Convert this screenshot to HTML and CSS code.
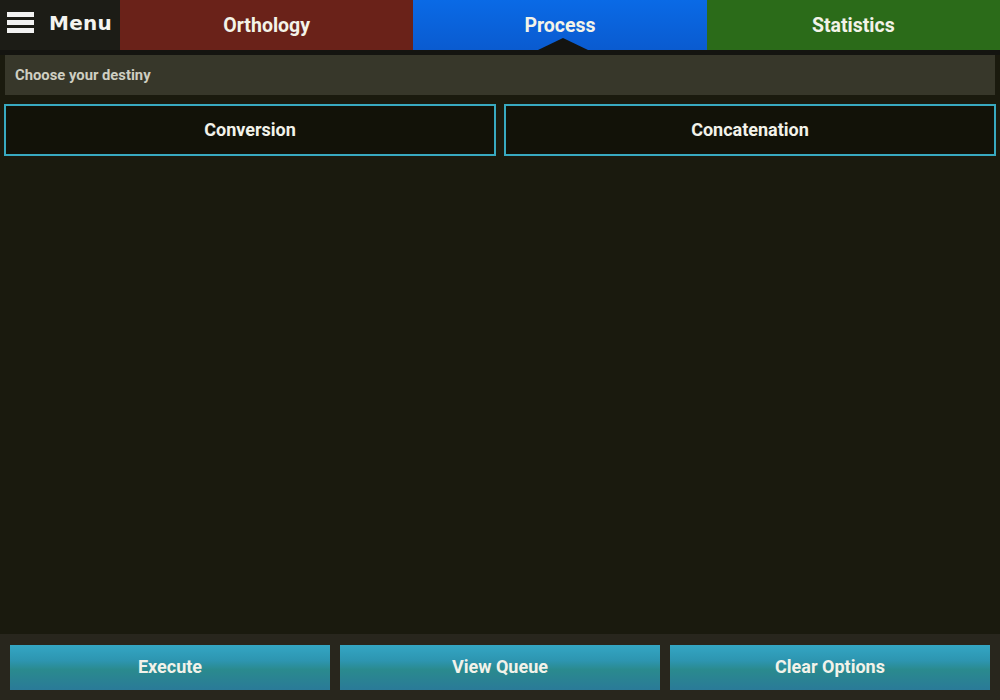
FILE: index.html
```html
<!DOCTYPE html>
<html>
<head>
<meta charset="utf-8">
<link rel="stylesheet" href="styles.css">
</head>
<body>
<div class="app">
  <header class="topbar">
    <div class="menu">
      <svg class="burger" width="28" height="22" viewBox="0 0 28 22"><rect x="0" y="0" width="27" height="5" fill="#f2f2f2"/><rect x="0" y="8" width="27" height="5" fill="#f2f2f2"/><rect x="0" y="16" width="27" height="5" fill="#f2f2f2"/></svg>
      <span class="menu-label">Menu</span>
    </div>
    <div class="tab tab-orth">Orthology</div>
    <div class="tab tab-proc active">Process</div>
    <div class="tab tab-stat">Statistics</div>
  </header>
  <div class="prompt"><span>Choose your destiny</span></div>
  <div class="choices">
    <button class="choice">Conversion</button>
    <button class="choice">Concatenation</button>
  </div>
  <main class="content"></main>
  <footer class="actions">
    <button class="action">Execute</button>
    <button class="action">View Queue</button>
    <button class="action">Clear Options</button>
  </footer>
</div>
</body>
</html>
```

FILE: styles.css
```css
html, body {
  margin: 0;
  padding: 0;
  width: 1000px;
  height: 700px;
  overflow: hidden;
  background: #1a1a0e;
  font-family: Roboto, "Liberation Sans", sans-serif;
}
.app {
  display: flex;
  flex-direction: column;
  height: 700px;
}
.topbar {
  display: flex;
  height: 50px;
  flex: none;
  border-bottom: 5px solid #141410;
}
.menu {
  width: 120px;
  flex: none;
  display: flex;
  align-items: center;
  padding-left: 7px;
  box-sizing: border-box;
  background: #1c1c16;
  padding-bottom: 4px;
}
.burger { display: block; }
.menu-label {
  margin-left: 14px;
  font-family: "DejaVu Sans", sans-serif;
  font-weight: bold;
  font-size: 20px;
  color: #f4f4f0;
  letter-spacing: 0.3px;
}
.tab {
  flex: 1;
  display: flex;
  align-items: center;
  justify-content: center;
  font-weight: bold;
  font-size: 19.5px;
  color: #f3f3e8;
  position: relative;
  padding-bottom: 0;
}
.tab-orth { background: #6a2219; }
.tab-proc { background: linear-gradient(#0a6ae6, #0a5bd0); }
.tab-stat { background: #2b6b19; }
.tab.active::after {
  content: "";
  position: absolute;
  left: 50%;
  bottom: 0;
  margin-left: -22px;
  border-left: 25px solid transparent;
  border-right: 25px solid transparent;
  border-bottom: 12px solid #141410;
}
.prompt {
  margin: 0 5px;
  height: 40px;
  background: #37372a;
  display: flex;
  align-items: center;
  padding-left: 10px;
  font-size: 14.8px;
  font-weight: bold;
  color: #cfcfc2;
  flex: none;
}
.choices {
  display: grid;
  grid-template-columns: 1fr 1fr;
  gap: 8px;
  padding: 9px 4px 0;
  flex: none;
}
.choice {
  height: 52px;
  background: #121208;
  border: 2px solid #38a9c0;
  color: #f2f2ea;
  font-family: Roboto, "Liberation Sans", sans-serif;
  font-weight: bold;
  font-size: 18px;
  padding: 0 0 1px;
}
.content { flex: 1; }
.actions {
  flex: none;
  height: 66px;
  background: #28261d;
  display: grid;
  grid-template-columns: 1fr 1fr 1fr;
  gap: 10px;
  padding: 11px 10px 10px;
  box-sizing: border-box;
}
.action {
  border: none;
  background: linear-gradient(#34a6c4 0%, #2d95b0 35%, #2a8a8e 55%, #2a7a98 100%);
  color: #f2f2ea;
  font-family: Roboto, "Liberation Sans", sans-serif;
  font-weight: bold;
  font-size: 18px;
  padding: 0 0 2px;
}
```
